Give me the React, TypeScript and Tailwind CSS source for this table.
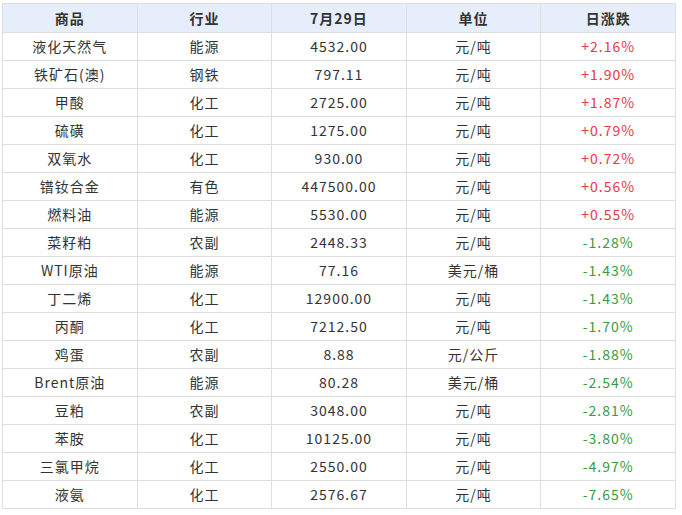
import React from "react";

const rows: [string, string, string, string, string][] = [
  ["液化天然气", "能源", "4532.00", "元/吨", "+2.16%"],
  ["铁矿石(澳)", "钢铁", "797.11", "元/吨", "+1.90%"],
  ["甲酸", "化工", "2725.00", "元/吨", "+1.87%"],
  ["硫磺", "化工", "1275.00", "元/吨", "+0.79%"],
  ["双氧水", "化工", "930.00", "元/吨", "+0.72%"],
  ["镨钕合金", "有色", "447500.00", "元/吨", "+0.56%"],
  ["燃料油", "能源", "5530.00", "元/吨", "+0.55%"],
  ["菜籽粕", "农副", "2448.33", "元/吨", "-1.28%"],
  ["WTI原油", "能源", "77.16", "美元/桶", "-1.43%"],
  ["丁二烯", "化工", "12900.00", "元/吨", "-1.43%"],
  ["丙酮", "化工", "7212.50", "元/吨", "-1.70%"],
  ["鸡蛋", "农副", "8.88", "元/公斤", "-1.88%"],
  ["Brent原油", "能源", "80.28", "美元/桶", "-2.54%"],
  ["豆粕", "农副", "3048.00", "元/吨", "-2.81%"],
  ["苯胺", "化工", "10125.00", "元/吨", "-3.80%"],
  ["三氯甲烷", "化工", "2550.00", "元/吨", "-4.97%"],
  ["液氨", "化工", "2576.67", "元/吨", "-7.65%"],
];

const headers = ["商品", "行业", "7月29日", "单位", "日涨跌"];

export default function App() {
  return (
    <div
      className="w-[682px] h-[515px] bg-white pt-[3px] pl-[2px]"
      style={{ fontFamily: '"Noto Sans CJK SC", "Noto Sans", sans-serif' }}
    >
      <table className="border-collapse table-fixed w-[674px] text-[14px] tracking-[1px] text-[#333]">
        <thead>
          <tr className="bg-[#e6eefb]">
            {headers.map((h) => (
              <th
                key={h}
                className="border border-[#dedede] h-[29px] p-0 font-bold text-center align-middle text-[#333]"
              >
                {h}
              </th>
            ))}
          </tr>
        </thead>
        <tbody>
          {rows.map((r, i) => (
            <tr key={i}>
              {r.map((c, j) => (
                <td
                  key={j}
                  className={
                    "border border-[#dedede] h-[28px] p-0 text-center align-middle " +
                    (j === 4
                      ? c.startsWith("+")
                        ? "text-[#e63a45]"
                        : "text-[#3a9a3f]"
                      : "")
                  }
                >
                  {c}
                </td>
              ))}
            </tr>
          ))}
        </tbody>
      </table>
    </div>
  );
}
